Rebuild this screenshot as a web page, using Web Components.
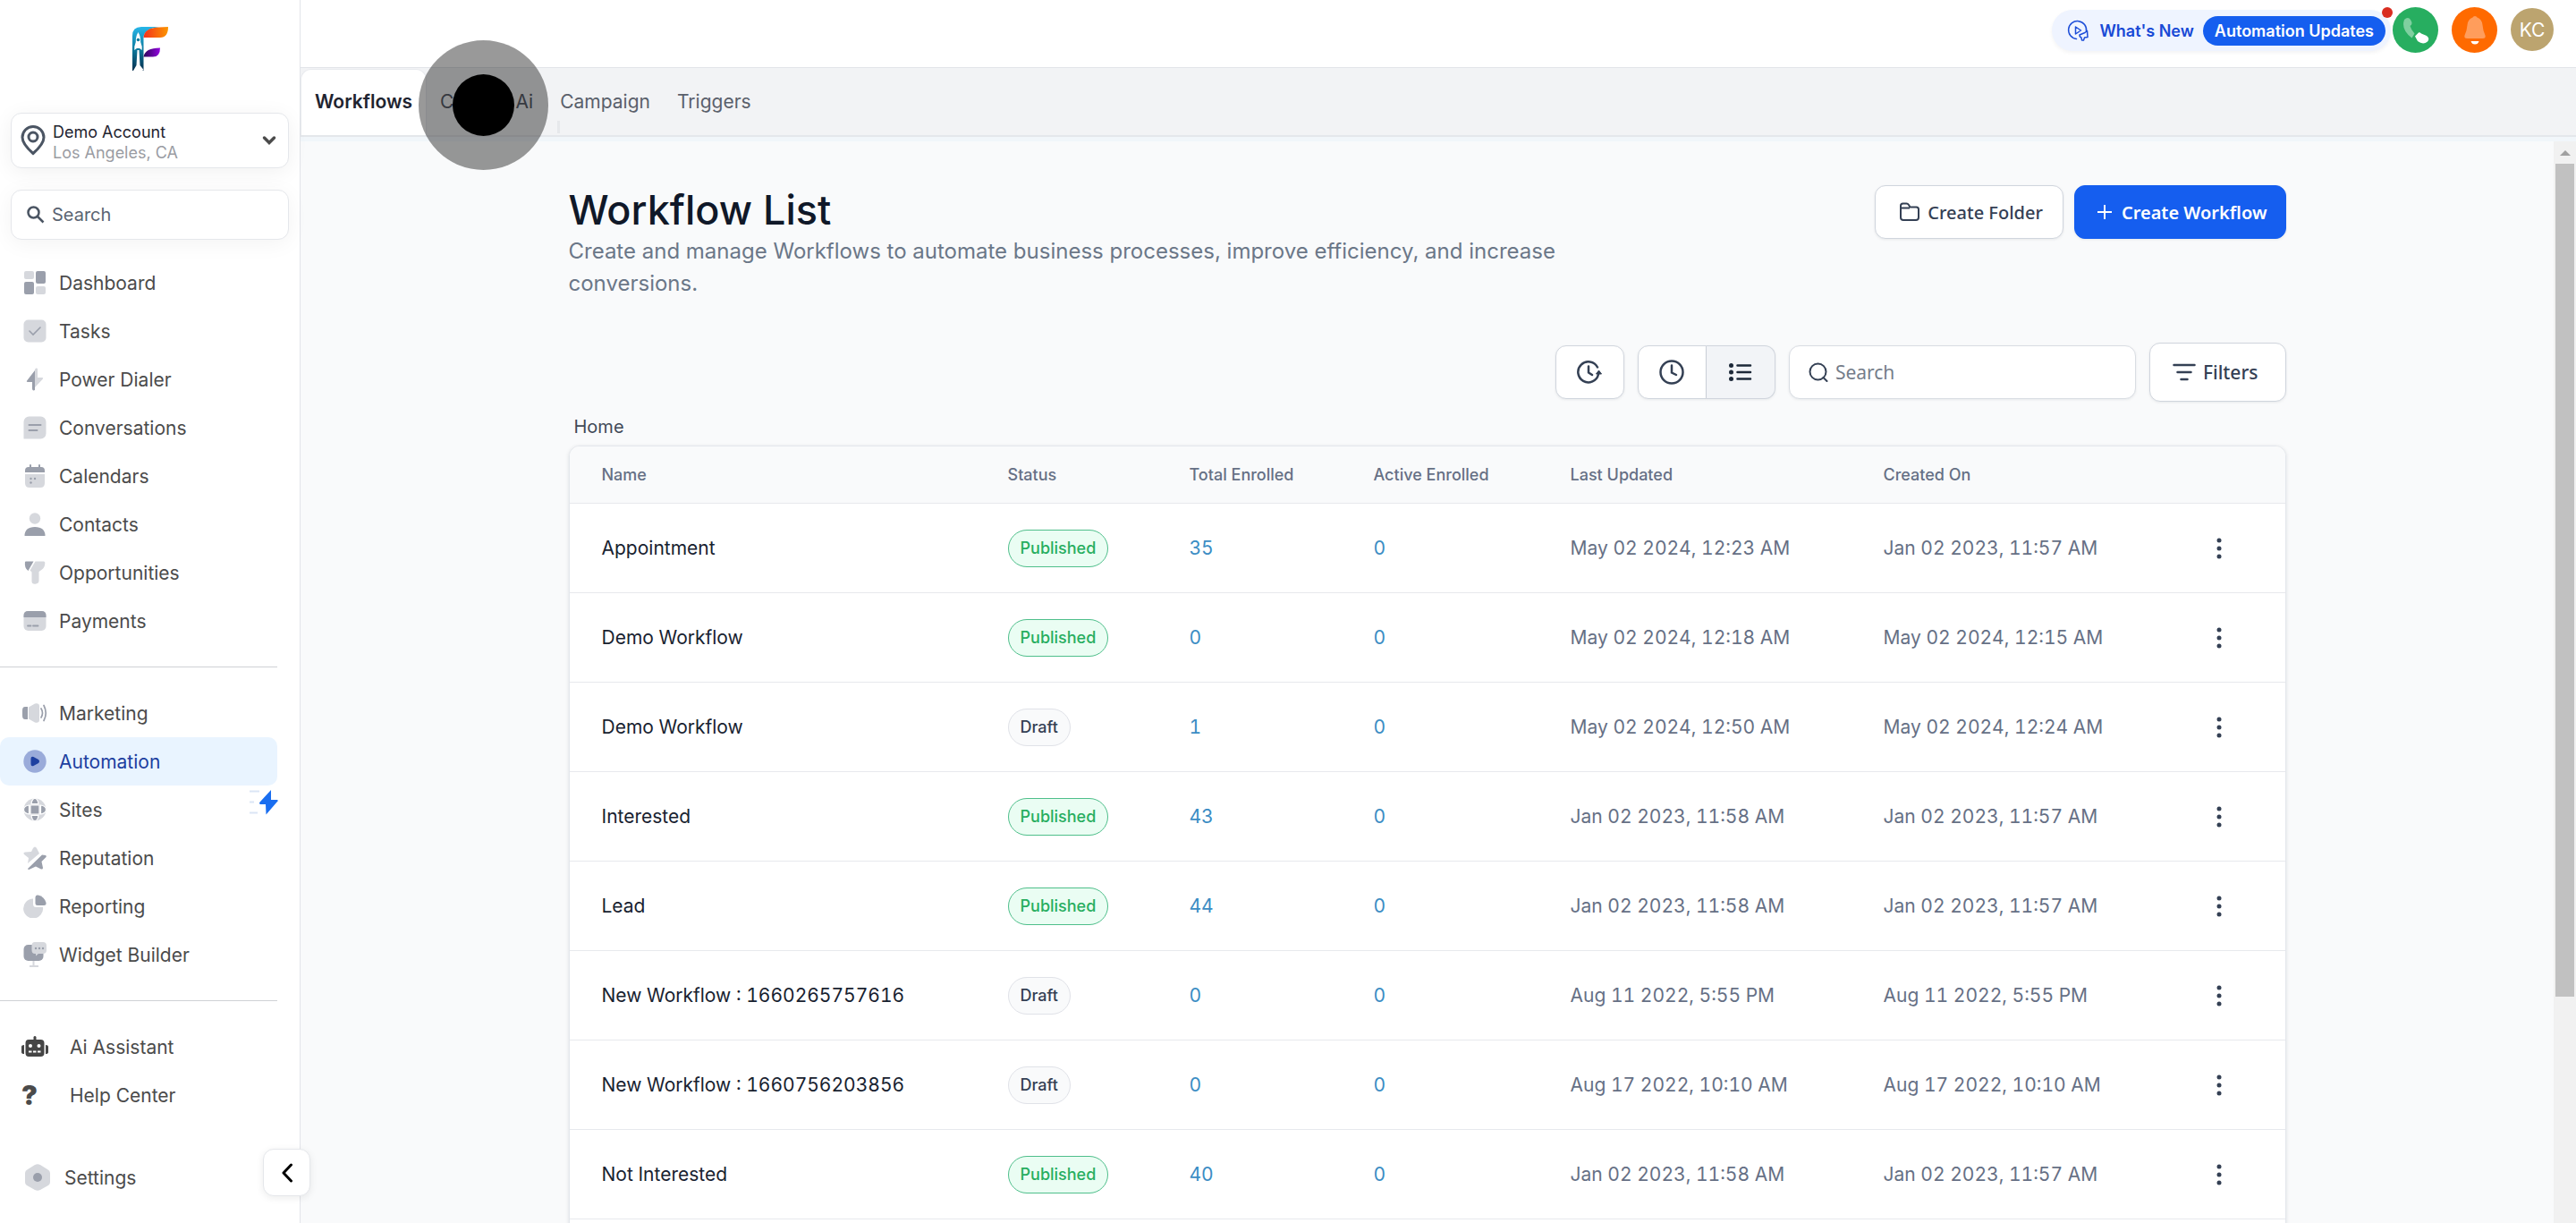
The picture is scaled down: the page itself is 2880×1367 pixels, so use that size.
<!DOCTYPE html>
<html lang="en">
<head>
<meta charset="utf-8">
<title>Workflows</title>
<style>
  html, body { margin: 0; height: 100%; }
  body {
    overflow: hidden;
    font-family: Inter, "Liberation Sans", sans-serif;
    font-size: 21px;
    color: #4b4b4b;
    background: #f9fafb;
  }
</style>
</head>
<body>
<app-shell>
  <side-bar slot="side"></side-bar>
  <top-bar slot="top"></top-bar>
  <tab-bar slot="top">
    <app-tab active>Workflows</app-tab>
    <app-tab>Content Ai</app-tab>
    <app-tab mark>Campaign</app-tab>
    <app-tab>Triggers</app-tab>
  </tab-bar>
  <workflow-page></workflow-page>
</app-shell>
<click-marker></click-marker>

<script>
const D = "#9a9fab";
const L = "#d6d8dd";

const icons = {
  dashboard: [26, 26, `<rect x="1" width="11" height="9" rx="2" fill="${L}"/><rect x="14" width="11" height="14" rx="2" fill="${D}"/><rect x="1" y="12" width="11" height="14" rx="2" fill="${D}"/><rect x="14" y="17" width="11" height="9" rx="2" fill="${L}"/>`],
  tasks: [26, 26, `<rect x=".5" y=".5" width="25" height="25" rx="5" fill="${L}"/><path d="M7 13l4 4 8-8" fill="none" stroke="${D}" stroke-width="1.6" stroke-linecap="round"/>`],
  dialer: [26, 26, `<path d="M13 3v22c-2 1-3 0-3-2v-7H5c-1.500 0-1.500-1-.5-2z" fill="${D}"/><path d="M13 2c1-2 3-2 3 0v9h5c1.500 0 1.500 1 .5 2L13 22z" fill="${L}"/>`],
  conversations: [26, 26, `<path d="M6.500.5h13a6 6 0 0 1 6 6v13a6 6 0 0 1-6 6H.5v-19a6 6 0 0 1 6-6z" fill="${L}"/><path d="M6.500 10h13M6.500 16h9" stroke="${D}" stroke-width="2" stroke-linecap="round"/>`],
  calendars: [26, 26, `<path d="M2 9V7q0-4 4-4h1V1q0-1 1-1t1 1v2h8V1q0-1 1-1t1 1v2h1q4 0 4 4v2z" fill="${D}"/><path d="M2 11h22v10q0 5-5 5H7q-5 0-5-5z" fill="${L}"/><g fill="${D}"><circle cx="8.500" cy="16" r="1.200"/><circle cx="13" cy="16" r="1.200"/><circle cx="8.500" cy="20.500" r="1.200"/></g>`],
  contacts: [26, 26, `<circle cx="13" cy="6.500" r="6.200" fill="${L}"/><path d="M1.500 26q0-10 11.500-10t11.500 10z" fill="${D}"/>`],
  opportunities: [26, 26, `<path d="M2 1q-1 7 3.500 10L11.500.5H3Q2 .5 2 1z" fill="${D}"/><path d="M13.500.5H23q1.500 0 1.300 2-.3 5-3.300 7l-3.500 2.500V22q0 3-3 3.500-5 1-5-3v-10q-1-1-2-2z" fill="${L}"/>`],
  payments: [26, 26, `<rect x=".5" y="2" width="25" height="22" rx="5" fill="${L}"/><path d="M.5 9V7q0-5 5-5h15q5 0 5 5v2z" fill="${D}"/><path d="M5 18.500h3.500M11 18.500h5.500" stroke="${D}" stroke-width="1.800" stroke-linecap="round"/>`],
  marketing: [28, 26, `<path d="M6 6v14H3q-3 0-3-4v-6q0-4 3-4z" fill="${D}"/><path d="M7 6.500l7-4q5-1 5 3v15q0 4-5 3l-7-4z" fill="${L}"/><path d="M21 8q3 5 0 10M24 4.500q4.500 8.500 0 17" fill="none" stroke="${D}" stroke-width="1.700" stroke-linecap="round"/>`],
  automation: [26, 26, `<circle cx="13" cy="13" r="12.700" fill="#9aabda"/><path d="M8.500 10q0-3 3-2l5.500 3q2 2 0 4l-5.500 3q-3 1-3-2z" fill="#1d3fa0"/>`],
  sites: [26, 26, `<circle cx="13" cy="13" r="12.500" fill="${L}"/><path d="M8 8h10v10H8zM9 6.500q1-6 4-6t4 6zM9 19.500q1 6 4 6t4-6zM6.500 8q-6 1-6 5t6 5zM19.500 8q6 1 6 5t-6 5z" fill="${D}" stroke="#fff" stroke-width="1.200"/>`],
  reputation: [26, 26, `<path d="M11 2q2-3 4 0l3 6-13 11 1-6-5-4q-1.500-2 1-2.500L9 6z" fill="${L}"/><path d="M5 25l16-15.500 4 .5q1.500 1 0 2.500l-4.500 4.500 1.500 7q0 2-2 1.500l-6-3-6.500 3q-2 1-2.500-.5z" fill="${D}"/>`],
  reporting: [26, 26, `<path d="M11 4.500v6q0 3.500 3.500 3.500H22a11 11 0 1 1-11-9.500z" fill="${L}"/><path d="M13.500 3q0-3 3-2.500 7 1.500 9 8.500.5 3-2.500 3h-7q-2.500 0-2.500-2.500z" fill="${D}"/>`],
  widget: [26, 28, `<rect x=".5" y="3" width="22" height="18" rx="5" fill="${D}"/><path d="M11.500 21v5M7 27h10" stroke="${L}" stroke-width="2"/><path d="M13 0h9q4 0 4 4v5q0 4-4 4h-5l-3 2.500V13H13q-3.500 0-3.500-4V4q0-4 3.500-4z" fill="${L}"/><g fill="${D}"><circle cx="14" cy="7" r="1.200"/><circle cx="18" cy="7" r="1.200"/><circle cx="22" cy="7" r="1.200"/></g>`],
  robot: [30, 26, `<g fill="#454545"><path d="M13.500 5V2q1.500-2 3 0v3h5q4 0 4 4v11q0 4-4 4H8q-3.500 0-3.500-4V9q0-4 3.500-4z"/><path d="M3 11v10q-3 0-3-2v-6q0-2 3-2zM27 11v10q3 0 3-2v-6q0-2-3-2z"/></g><g fill="#fff"><circle cx="10" cy="12" r="2"/><circle cx="19.500" cy="12" r="2"/><path d="M8 17.500h3.500v2H8zM13 17.500h3.500v2H13zM18 17.500h3.500v2H18z"/></g>`],
  settings: [28, 30, `<path d="M11 1q3-1.500 6 0l8 5q3 1.500 3 4v10q0 3-3 4.500l-8 4.500q-3 1.500-6 0l-8-4.500q-3-1.500-3-4.500V10q0-2.500 3-4z" fill="${L}"/><circle cx="14" cy="15" r="5" fill="${D}"/>`],
  pin: [28, 34, `<path d="M14 31.500q-12-10.500-12-18a12 12 0 0 1 24 0q0 7.500-12 18z" fill="none" stroke="#4b5563" stroke-width="3"/><circle cx="14" cy="13" r="5" fill="none" stroke="#4b5563" stroke-width="3"/>`],
  chevron: [16, 12, `<path d="M2.500 3l5.500 5.500L13.500 3" fill="none" stroke="#4b4b4b" stroke-width="3.500" stroke-linecap="round"/>`],
  find: [20, 20, `<circle cx="7.500" cy="7.500" r="6" fill="none" stroke="#4b5563" stroke-width="2.500"/><path d="M12 12l6.500 6.500" stroke="#4b5563" stroke-width="2.500"/>`],
  bolt: [32, 28, `<path d="M0 1.500h11M0 13.500h5M0 25.500h9" stroke="#dbe5f5" stroke-width="2"/><path d="M24 0v11h7q1.500 1 0 2L18.500 27.500 18 16h-6q-2-1 0-3z" fill="#1a6ef0"/>`],
  back: [14, 22, `<path d="M11.500 2L3 11l8.500 9" fill="none" stroke="#000" stroke-width="3" stroke-linecap="round" stroke-linejoin="round"/>`],
  news: [24, 24, `<g fill="none" stroke="#1d4ed8" stroke-width="1.500" stroke-linejoin="round" stroke-linecap="round"><path d="M10.500 21.500A10 10 0 1 1 21.500 13"/><path d="M9.500 8v8l6-4z"/><path d="M14 17l6-2.500 2.500-2 .5 7-3.500.5-1 3h-2l-.5-3q-2-.5-2-3z"/></g>`],
  phone: [32, 32, `<path d="M3 4q5-5 8 2 1.500 3-1.500 5 1 4 5 8.500l-3 5Q-1 15 3 4z" fill="#7fd0a0"/><path d="M15 22.500l4-4q1-1 3 1l6 2.500q4 3 1 6.500-5 4-11-.5z" fill="#fff"/>`],
  bell: [26, 34, `<path d="M13 1q2 0 2.500 1.500Q21 4.500 21.500 11t3 11.500q1 3.500-3 3.500h-17q-4 0-3-3.500Q4 17.500 4.500 11T10.500 2.500Q11 1 13 1z" fill="#ff9d5c"/><path d="M8.500 29h9q-1 3.500-4.500 3.500T8.500 29z" fill="#fff"/>`],
  folder: [24, 22, `<path d="M2 5V4q0-2.500 2.500-2.500h4Q10 1.500 11 3l1.500 2.500h7Q22 5.500 22 8v9q0 3-3 3H5q-3 0-3-3zM2 6.500h10" fill="none" stroke="#344054" stroke-width="2"/>`],
  plus: [18, 18, `<path d="M9 1v16M1 9h16" stroke="#fff" stroke-width="2"/>`],
  refresh: [28, 26, `<g fill="none" stroke="#344054" stroke-width="2.500" stroke-linecap="round" stroke-linejoin="round"><path d="M23 7.500A11.500 11.500 0 1 0 24 15.500"/><path d="M13 6.500v7l4 2.500"/></g><path d="M24.500 11l3 4h-6z" fill="#344054" stroke="#344054" stroke-linejoin="round"/>`],
  clock: [30, 30, `<g fill="none" stroke="#344054" stroke-width="2.500" stroke-linecap="round"><circle cx="15" cy="15" r="12.500"/><path d="M15 7.500v8l5 2.500"/></g>`],
  list: [26, 20, `<path d="M9.500 2.500h14.500M9.500 10h14.500M9.500 17.500h14.500" stroke="#1d2939" stroke-width="2.500" stroke-linecap="round"/><g fill="#1d2939"><circle cx="2.500" cy="2.500" r="2.500"/><circle cx="2.500" cy="10" r="2.500"/><circle cx="2.500" cy="17.500" r="2.500"/></g>`],
  lens: [22, 22, `<circle cx="10.500" cy="10.500" r="9" fill="none" stroke="#344054" stroke-width="2"/><path d="M16.500 17l4 4" stroke="#344054" stroke-width="2" stroke-linecap="round"/>`],
  filter: [26, 20, `<path d="M1.500 2h23M5.500 10h15M9.500 18h7" stroke="#344054" stroke-width="2.500" stroke-linecap="round"/>`],
  dots: [6, 24, `<g fill="#344054"><circle cx="3" cy="3" r="2.500"/><circle cx="3" cy="12" r="2.500"/><circle cx="3" cy="21" r="2.500"/></g>`],
  logo: [40, 50, `
    <defs>
      <linearGradient id="a" x1="0" y1="0" x2="0" y2="1"><stop offset="0" stop-color="#27b6e8"/><stop offset=".5" stop-color="#0d7ca0"/><stop offset="1" stop-color="#062f4e"/></linearGradient>
      <linearGradient id="b"><stop offset="0" stop-color="#f5301c"/><stop offset="1" stop-color="#fb9600"/></linearGradient>
      <linearGradient id="c"><stop offset="0" stop-color="#2c0458"/><stop offset="1" stop-color="#9405e0"/></linearGradient>
    </defs>
    <path d="M0 10Q0 0 10 0h20Q13 2 12.500 12v37H0z" fill="url(#a)"/>
    <path d="M12.500 12Q13 1 30 .5L40 0q0 12-9 12z" fill="url(#b)"/>
    <path d="M12.500 33.500Q14 23.500 31 23.500q0 10-8 10z" fill="url(#c)"/>
    <path d="M6.500 6q3 5 2.700 11l1.500 5v4l-2.700-2H5l-2.700 2v-4l1.500-5Q3.500 11 6.500 6zM5.500 26h2l1 17 4 5-3 2H3l-2-1 3.500-6z" fill="#fff"/>
    <circle cx="6.500" cy="14.500" r="1.800" fill="#0d7ca0"/>`]
};

class AppIcon extends HTMLElement{
  constructor(){
    super();
    this.attachShadow({mode:"open"});
  }
  connectedCallback(){
    const [w, h, body] = icons[this.getAttribute("name")];
    this.shadowRoot.innerHTML = `
      <style>:host{display:inline-flex;flex:none} svg{display:block}</style>
      <svg width="${w}" height="${h}" viewBox="0 0 ${w} ${h}" aria-hidden="true">${body}</svg>`;
  }
}
customElements.define("app-icon", AppIcon);

// Small helper: every element below has static markup in its shadow root
function define(name, html){
  const template = document.createElement("template");
  template.innerHTML = html;
  customElements.define(name, class extends HTMLElement{
    constructor(){
      super();
      this.attachShadow({mode:"open"});
      this.shadowRoot.appendChild(template.content.cloneNode(true));
    }
  });
}

class NavItem extends HTMLElement{
  constructor(){
    super();
    this.attachShadow({mode:"open"});
  }
  connectedCallback(){
    const icon = this.getAttribute("icon");
    this.shadowRoot.innerHTML = `
      <style>
        :host{display:block;--gap:12px}
        :host([wide]){--gap:24px}
        a{
          display:flex;align-items:center;gap:var(--gap);
          height:54px;padding-left:24px;border-radius:10px;
          color:#4b4b4b;text-decoration:none;
        }
        .icon{display:flex;justify-content:center;width:30px}
        .mark{font-size:30px;font-weight:900;width:30px}
        :host([active]) a{background:#e9f4ff;color:#1d3fa0}
      </style>
      <a href="#">
        ${icon ? `<span class="icon"><app-icon name="${icon}"></app-icon></span>` : `<span class="mark">?</span>`}
        <slot></slot>
      </a>`;
  }
}
customElements.define("nav-item", NavItem);

define("account-switcher", `
  <style>
    :host{display:block}
    button{
      display:flex;align-items:center;gap:8px;
      box-sizing:border-box;width:100%;height:62px;padding:0 13px 0 10px;
      border:1px solid #e5e7eb;border-radius:12px;background:#fff;
      box-shadow:0 4px 24px rgba(0,0,0,.06);
      font:18px/23px Inter, sans-serif;text-align:left;color:#1f2430;
    }
    .text{flex:1;padding-top:4px}
    .place{display:block;color:#9a9ca3}
  </style>
  <button type="button">
    <app-icon name="pin"></app-icon>
    <span class="text">Demo Account<span class="place">Los Angeles, CA</span></span>
    <app-icon name="chevron"></app-icon>
  </button>`);

define("side-bar", `
  <style>
    :host{
      display:flex;flex-direction:column;position:relative;
      box-sizing:border-box;height:100%;
      background:#fff;border-right:1px solid #e2e4e9;
    }
    .logo{display:flex;justify-content:center;padding:30px 0 46px}
    account-switcher,.search{margin:0 12px}
    .search{
      display:flex;align-items:center;gap:8px;flex:none;
      box-sizing:border-box;height:56px;margin-top:24px;padding-left:17px;
      border:1px solid #e5e7eb;border-radius:12px;background:#fff;
      box-shadow:0 4px 24px rgba(0,0,0,.05);
    }
    input{flex:1;min-width:0;border:0;outline:0;padding:0;background:none;font:20px Inter, sans-serif}
    input::placeholder{color:#5b6472;opacity:1}
    nav{flex:1;min-height:0;margin-top:21px;padding-right:25px}
    hr{margin:24px 0;border:0;border-top:1px solid #cfd1d5}
    footer{padding:56px 0 24px}
    footer a{
      display:flex;align-items:center;gap:16px;height:54px;padding-left:28px;
      color:#4b4b4b;text-decoration:none;
    }
    .bolt{position:absolute;right:24px;top:883px}
    .fold{
      position:absolute;right:-12px;bottom:30px;
      display:flex;align-items:center;justify-content:center;
      width:53px;height:53px;padding:0;
      border:1px solid #e5e7eb;border-radius:12px;background:#fff;
      box-shadow:0 2px 8px rgba(0,0,0,.08);
    }
  </style>
  <div class="logo"><app-icon name="logo"></app-icon></div>
  <account-switcher></account-switcher>
  <label class="search"><app-icon name="find"></app-icon><input type="text" placeholder="Search" aria-label="Search"></label>
  <nav>
    <nav-item icon="dashboard">Dashboard</nav-item>
    <nav-item icon="tasks">Tasks</nav-item>
    <nav-item icon="dialer">Power Dialer</nav-item>
    <nav-item icon="conversations">Conversations</nav-item>
    <nav-item icon="calendars">Calendars</nav-item>
    <nav-item icon="contacts">Contacts</nav-item>
    <nav-item icon="opportunities">Opportunities</nav-item>
    <nav-item icon="payments">Payments</nav-item>
    <hr>
    <nav-item icon="marketing">Marketing</nav-item>
    <nav-item icon="automation" active>Automation</nav-item>
    <nav-item icon="sites">Sites</nav-item>
    <nav-item icon="reputation">Reputation</nav-item>
    <nav-item icon="reporting">Reporting</nav-item>
    <nav-item icon="widget">Widget Builder</nav-item>
    <hr>
    <nav-item icon="robot" wide>Ai Assistant</nav-item>
    <nav-item wide>Help Center</nav-item>
  </nav>
  <footer><a href="#"><app-icon name="settings"></app-icon>Settings</a></footer>
  <app-icon class="bolt" name="bolt"></app-icon>
  <button class="fold" type="button" aria-label="Collapse"><app-icon name="back"></app-icon></button>`);

define("top-bar", `
  <style>
    :host{
      display:flex;justify-content:flex-end;align-items:flex-start;
      box-sizing:border-box;height:76px;padding:8px 25px 0 0;
      background:#fff;border-bottom:1px solid #e2e4e9;
    }
    .news{
      position:relative;display:flex;align-items:center;
      box-sizing:border-box;height:46px;margin:3px 2px 0 0;padding:0 6px 0 17px;
      border-radius:23px;background:#eff4ff;
      box-shadow:0 2px 4px rgba(16,24,40,.05);
      font-size:18px;font-weight:600;
    }
    .news a{display:flex;align-items:center;gap:12px;margin-right:10px;color:#1849d6;text-decoration:none}
    button{border:0;padding:0;color:#fff;font-family:inherit}
    .update{height:33px;padding:0 13px;border-radius:17px;background:#155eef;font-size:18px;font-weight:600}
    .dot{position:absolute;right:-2px;top:-3px;width:12px;height:12px;border-radius:50%;background:#d92d20}
    .round{display:flex;align-items:center;justify-content:center;width:51px;height:51px;border-radius:50%;margin-right:15px}
    .call{background:#27ae60}
    .alert{background:#ff6a00}
    .user{width:48px;height:48px;margin:1px 0 0;background:#bca46f;font-size:21px}
  </style>
  <div class="news">
    <a href="#"><app-icon name="news"></app-icon>What's New</a>
    <button class="update" type="button">Automation Updates</button>
    <span class="dot"></span>
  </div>
  <button class="round call" type="button" aria-label="Call"><app-icon name="phone"></app-icon></button>
  <button class="round alert" type="button" aria-label="Notifications"><app-icon name="bell"></app-icon></button>
  <button class="round user" type="button">KC</button>`);

define("tab-bar", `
  <style>
    :host{
      display:flex;box-sizing:border-box;height:77px;padding-top:1px;
      background:#f2f3f5;border-bottom:2px solid #e4e7eb;
      box-shadow:0 5px 0 #f1f6fa;position:relative;
    }
  </style>
  <slot></slot>`);

define("app-tab", `
  <style>
    :host{display:block;position:relative}
    a{
      display:flex;align-items:center;box-sizing:border-box;height:74px;padding:0 15px 2px;
      color:#5a606b;text-decoration:none;
    }
    :host([active]) a{
      background:#fff;color:#1f2430;font-weight:600;
      border:1px solid #e8eaee;border-bottom:0;border-radius:12px 12px 0 0;
    }
    :host([mark])::after{
      content:"";position:absolute;left:12px;bottom:2px;width:3px;height:14px;background:#e6e8eb;
    }
  </style>
  <a href="#"><slot></slot></a>`);

define("page-scrollbar", `
  <style>
    :host{display:flex;flex-direction:column;align-items:center;width:25px;background:#f1f1f1}
    .arrow{margin:10px 0 9px;border:6px solid transparent;border-top:0;border-bottom:6px solid #a0a0a0}
    .thumb{width:21px;height:77%;background:#c1c1c1}
  </style>
  <span class="arrow"></span>
  <span class="thumb"></span>`);

define("status-badge", `
  <style>
    :host{
      display:inline-flex;align-items:center;box-sizing:border-box;height:42px;padding:0 13px;
      border:1px solid #e0e2e8;border-radius:21px;background:#f9fafb;
      color:#344054;font-size:18px;font-weight:500;vertical-align:middle;
    }
    :host([published]){border-color:#4fbf8b;background:#eafdf3;color:#27ae60}
  </style>
  <slot></slot>`);

const workflows = [
  ["Appointment", "Published", 35, 0, "May 02 2024, 12:23 AM", "Jan 02 2023, 11:57 AM"],
  ["Demo Workflow", "Published", 0, 0, "May 02 2024, 12:18 AM", "May 02 2024, 12:15 AM"],
  ["Demo Workflow", "Draft", 1, 0, "May 02 2024, 12:50 AM", "May 02 2024, 12:24 AM"],
  ["Interested", "Published", 43, 0, "Jan 02 2023, 11:58 AM", "Jan 02 2023, 11:57 AM"],
  ["Lead", "Published", 44, 0, "Jan 02 2023, 11:58 AM", "Jan 02 2023, 11:57 AM"],
  ["New Workflow : 1660265757616", "Draft", 0, 0, "Aug 11 2022, 5:55 PM", "Aug 11 2022, 5:55 PM"],
  ["New Workflow : 1660756203856", "Draft", 0, 0, "Aug 17 2022, 10:10 AM", "Aug 17 2022, 10:10 AM"],
  ["Not Interested", "Published", 40, 0, "Jan 02 2023, 11:58 AM", "Jan 02 2023, 11:57 AM"]
];

class WorkflowTable extends HTMLElement{
  constructor(){
    super();
    this.attachShadow({mode:"open"});
  }
  connectedCallback(){
    this.render();
  }
  render(){
    const rows = workflows.map(([name, status, total, active, updated, created]) => `
      <tr>
        <td class="name">${name}</td>
        <td><status-badge ${status == "Published" ? "published" : ""}>${status}</status-badge></td>
        <td><a href="#">${total}</a></td>
        <td><a href="#">${active}</a></td>
        <td>${updated}</td>
        <td>${created}</td>
        <td><button type="button" aria-label="More"><app-icon name="dots"></app-icon></button></td>
      </tr>`).join("");
    this.shadowRoot.innerHTML = `
      <style>
        :host{
          display:block;overflow:hidden;border-radius:12px 12px 0 0;background:#fff;
          border:1px solid #e4e7ec;box-shadow:0 1px 4px rgba(16,24,40,.12);
        }
        table{width:100%;table-layout:fixed;border-collapse:collapse;text-align:left;font-variant-numeric:tabular-nums}
        th{height:63px;padding:0 0 0 36px;background:#f9fafb;font-size:18px;font-weight:500;color:#667085}
        td{height:99px;padding:0 0 0 36px;color:#667085}
        tr{border-bottom:1px solid #e7e9ed}
        .name{color:#182230}
        a{color:#3b8dc4;text-decoration:none}
        button{display:flex;justify-content:center;width:50px;padding:8px 0;border:0;background:none}
        .status{width:167px}
        .total{width:170px}
        .active{width:184px}
        .date{width:314px}
        .more{width:99px}
      </style>
      <table>
        <thead>
          <tr>
            <th>Name</th>
            <th class="status">Status</th>
            <th class="total">Total Enrolled</th>
            <th class="active">Active Enrolled</th>
            <th class="date">Last Updated</th>
            <th class="date">Created On</th>
            <th class="more"></th>
          </tr>
        </thead>
        <tbody>${rows}<tr><td colspan="7"></td></tr></tbody>
      </table>`;
  }
}
customElements.define("workflow-table", WorkflowTable);

define("workflow-page", `
  <style>
    :host{display:block;max-width:1920px;margin:0 auto;padding-top:49px}
    header{display:flex;justify-content:space-between;align-items:flex-start}
    h1{margin:0;font-size:45px;font-weight:500;line-height:56px;color:#101828}
    p{margin:0;max-width:1150px;font-size:24px;line-height:36px;color:#6b7788}
    button{
      display:flex;align-items:center;justify-content:center;gap:8px;
      box-sizing:border-box;height:60px;padding:0 22px 0 26px;
      border:1px solid #d0d5dd;border-radius:12px;background:#fff;
      box-shadow:0 1px 3px rgba(16,24,40,.08);
      color:#344054;font:500 20px "Noto Sans", sans-serif;
    }
    .actions,.tools,.group{display:flex}
    .actions{gap:12px}
    .primary{background:#155eef;border-color:#155eef;color:#fff;gap:10px;padding:0 20px 0 24px;font-weight:600}
    .tools{justify-content:flex-end;align-items:center;gap:15px;margin-top:48px}
    .icon{width:77px;padding:0}
    .group .icon:first-child{border-radius:12px 0 0 12px}
    .group .icon:last-child{border-radius:0 12px 12px 0;border-left:0;background:#f2f4f7}
    label{
      display:flex;align-items:center;gap:8px;
      box-sizing:border-box;width:388px;height:60px;padding:0 21px;
      border:1px solid #d9dde3;border-radius:12px;background:#fff;
      box-shadow:0 1px 3px rgba(16,24,40,.08);
    }
    input{flex:1;min-width:0;padding:0;border:0;outline:0;font:21px "Noto Sans", sans-serif}
    input::placeholder{color:#757d8a;opacity:1}
    .filters{height:66px;padding:0 30px 0 25px;font-size:21px}
    .crumb{display:block;padding:13px 6px 6px;font-size:20px;line-height:30px;color:#414957;text-decoration:none}
  </style>
  <header>
    <div>
      <h1>Workflow List</h1>
      <p>Create and manage Workflows to automate business processes, improve efficiency, and increase conversions.</p>
    </div>
    <div class="actions">
      <button type="button"><app-icon name="folder"></app-icon>Create Folder</button>
      <button class="primary" type="button"><app-icon name="plus"></app-icon>Create Workflow</button>
    </div>
  </header>
  <div class="tools">
    <button class="icon" type="button" aria-label="Refresh"><app-icon name="refresh"></app-icon></button>
    <div class="group">
      <button class="icon" type="button" aria-label="Recent"><app-icon name="clock"></app-icon></button>
      <button class="icon" type="button" aria-label="List"><app-icon name="list"></app-icon></button>
    </div>
    <label><app-icon name="lens"></app-icon><input type="text" placeholder="Search" aria-label="Search"></label>
    <button class="filters" type="button"><app-icon name="filter"></app-icon>Filters</button>
  </div>
  <a class="crumb" href="#">Home</a>
  <workflow-table></workflow-table>`);

define("app-shell", `
  <style>
    :host{display:grid;grid-template-columns:336px minmax(0, 1fr);height:100vh}
    aside{position:relative;z-index:1;min-height:0}
    .right{display:flex;flex-direction:column;min-height:0}
    .body{display:flex;flex:1;min-height:0;margin-top:5px}
    main{flex:1;min-width:0;overflow:hidden}
  </style>
  <aside><slot name="side"></slot></aside>
  <div class="right">
    <slot name="top"></slot>
    <div class="body">
      <main><slot></slot></main>
      <page-scrollbar></page-scrollbar>
    </div>
  </div>`);

// Pointer highlight, floats over the tabs
define("click-marker", `
  <style>
    :host{
      position:absolute;left:468px;top:45px;z-index:2;
      display:flex;align-items:center;justify-content:center;
      width:145px;height:145px;border-radius:50%;background:rgba(0,0,0,.4);
    }
    span{width:69px;height:69px;border-radius:50%;background:#000}
  </style>
  <span></span>`);
</script>
</body>
</html>
